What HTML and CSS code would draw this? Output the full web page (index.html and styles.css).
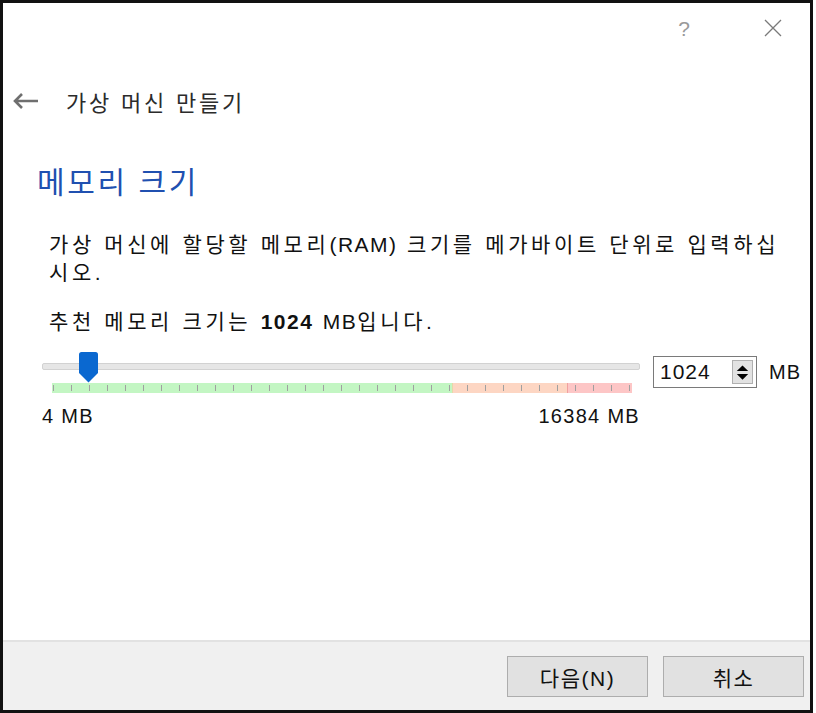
FILE: index.html
```html
<!DOCTYPE html>
<html lang="ko">
<head>
<meta charset="utf-8">
<title>가상 머신 만들기</title>
<link rel="stylesheet" href="styles.css">
</head>
<body>
<div class="window">
  <div class="titlebar">
    <span class="help">?</span>
    <svg class="close" width="18" height="18" viewBox="0 0 18 18"><path d="M1 1 L17 17 M17 1 L1 17" stroke="#7a7a7a" stroke-width="1.3" fill="none"/></svg>
  </div>
  <div class="header">
    <svg class="back" width="26" height="16" viewBox="0 0 26 16"><path d="M26 8 H3 M10 1 L3 8 L10 15" stroke="#6f6f6f" stroke-width="2.6" fill="none"/></svg>
    <span class="title">가상 머신 만들기</span>
  </div>
  <h1 class="heading">메모리 크기</h1>
  <p class="desc">가상 머신에 할당할 메모리<span class="latin">(RAM)</span> 크기를 메가바이트 단위로 입력하십<br>시오.</p>
  <p class="recommend">추천 메모리 크기는 <b class="latin">1024</b> <span class="latin">MB</span>입니다.</p>
  <div class="memrow">
    <div class="slider">
      <div class="track-wrap">
        <div class="track"></div>
        <svg class="thumb" style="left:37px" width="19" height="31" viewBox="0 0 19 31"><path d="M2.5 0 H16.5 Q19 0 19 2.5 V21 L9.5 30.5 L0 21 V2.5 Q0 0 2.5 0 Z" fill="#0a68d0"/></svg>
      </div>
      <div class="scale"></div>
      <div class="labels"><span>4 MB</span><span>16384 MB</span></div>
    </div>
    <div class="spinbox">
      <span class="value">1024</span>
      <div class="arrows">
        <svg width="20" height="23" viewBox="0 0 20 23"><path d="M4 10 L10 4 L16 10 Z M4 13 L16 13 L10 19 Z" fill="#000"/></svg>
      </div>
    </div>
    <span class="unit">MB</span>
  </div>
  <div class="footer">
    <button class="btn">다음(N)</button>
    <button class="btn">취소</button>
  </div>
</div>
</body>
</html>
```
FILE: styles.css
```css
* { box-sizing: border-box; }
html, body { margin: 0; padding: 0; background: #fff; }
body {
  font-family: "Liberation Sans", "Noto Sans CJK KR", sans-serif;
  color: #111;
}
.window {
  width: 813px;
  height: 713px;
  border: 3px solid #111;
  display: flex;
  flex-direction: column;
  background: #fff;
}
.titlebar {
  height: 50px;
  display: flex;
  justify-content: flex-end;
  align-items: center;
  padding-right: 28px;
}
.help {
  font-size: 21px;
  color: #9a9a9a;
  margin-right: 74px;
  line-height: 1;
}
.close { display: block; }
.header {
  margin-top: 26px;
  height: 44px;
  display: flex;
  align-items: center;
  padding-left: 9px;
}
.back { display: block; }
.title {
  margin-left: 28px;
  font-size: 22px;
  letter-spacing: 2.8px;
  color: #2b2b2b;
}
.heading {
  margin: 40px 0 0 34px;
  height: 40px;
  line-height: 40px;
  font-size: 30px;
  font-weight: normal;
  letter-spacing: 2.6px;
  color: #2050b0;
}
.desc, .recommend {
  margin: 0 0 0 46px;
  font-size: 21px;
  line-height: 28px;
  letter-spacing: 3.6px;
  white-space: nowrap;
  color: #111;
}
.desc { margin-top: 28px; }
.recommend { margin-top: 21px; }
.latin { letter-spacing: 1.5px; }
.recommend b { font-weight: bold; }
.memrow {
  margin: 16px 0 0 39px;
  display: flex;
  align-items: flex-start;
}
.slider { width: 598px; }
.track-wrap {
  position: relative;
  height: 31px;
  padding-top: 11px;
}
.track {
  height: 7px;
  background: #e6e6e6;
  border: 1px solid #d2d2d2;
  border-radius: 2px;
}
.thumb {
  position: absolute;
  top: 0;
  display: block;
}
.scale {
  margin-left: 10px;
  width: 580px;
  height: 10px;
  background:
    repeating-linear-gradient(90deg, #a0a0a0 0 1px, transparent 1px 18px) 1px 2px / 100% 6px no-repeat,
    linear-gradient(90deg, #c3f6c3 0 400px, #e6d8a8 400px 401px, #fdd6c3 401px 515px, #f0a0a0 515px 516px, #fdc6c6 516px);
}
.labels {
  margin-top: 11px;
  display: flex;
  justify-content: space-between;
  font-size: 20px;
  line-height: 24px;
  letter-spacing: 1.3px;
  color: #111;
}
.spinbox {
  margin: 4px 0 0 13px;
  width: 104px;
  height: 32px;
  border: 1px solid #7a7a7a;
  display: flex;
  align-items: center;
  justify-content: space-between;
  padding: 0 3px 0 6px;
}
.value {
  font-size: 21px;
  letter-spacing: 1px;
}
.arrows {
  width: 21px;
  height: 24px;
  background: #e2e2e2;
  border: 1px solid #b0b0b0;
  display: flex;
  align-items: center;
  justify-content: center;
}
.arrows svg { display: block; }
.unit {
  margin: 8px 0 0 12px;
  font-size: 20px;
  letter-spacing: 1px;
  line-height: 24px;
}
.footer {
  margin-top: auto;
  height: 70px;
  background: #f0f0f0;
  border-top: 2px solid #e2e2e2;
  display: flex;
  justify-content: flex-end;
  align-items: flex-start;
  padding: 14px 6px 0 0;
  gap: 15px;
}
.btn {
  width: 141px;
  height: 41px;
  background: #e1e1e1;
  border: 1px solid #adadad;
  font-family: "Liberation Sans", "Noto Sans CJK KR", sans-serif;
  font-size: 21px;
  letter-spacing: 1.5px;
  color: #111;
  padding: 0;
}
```
